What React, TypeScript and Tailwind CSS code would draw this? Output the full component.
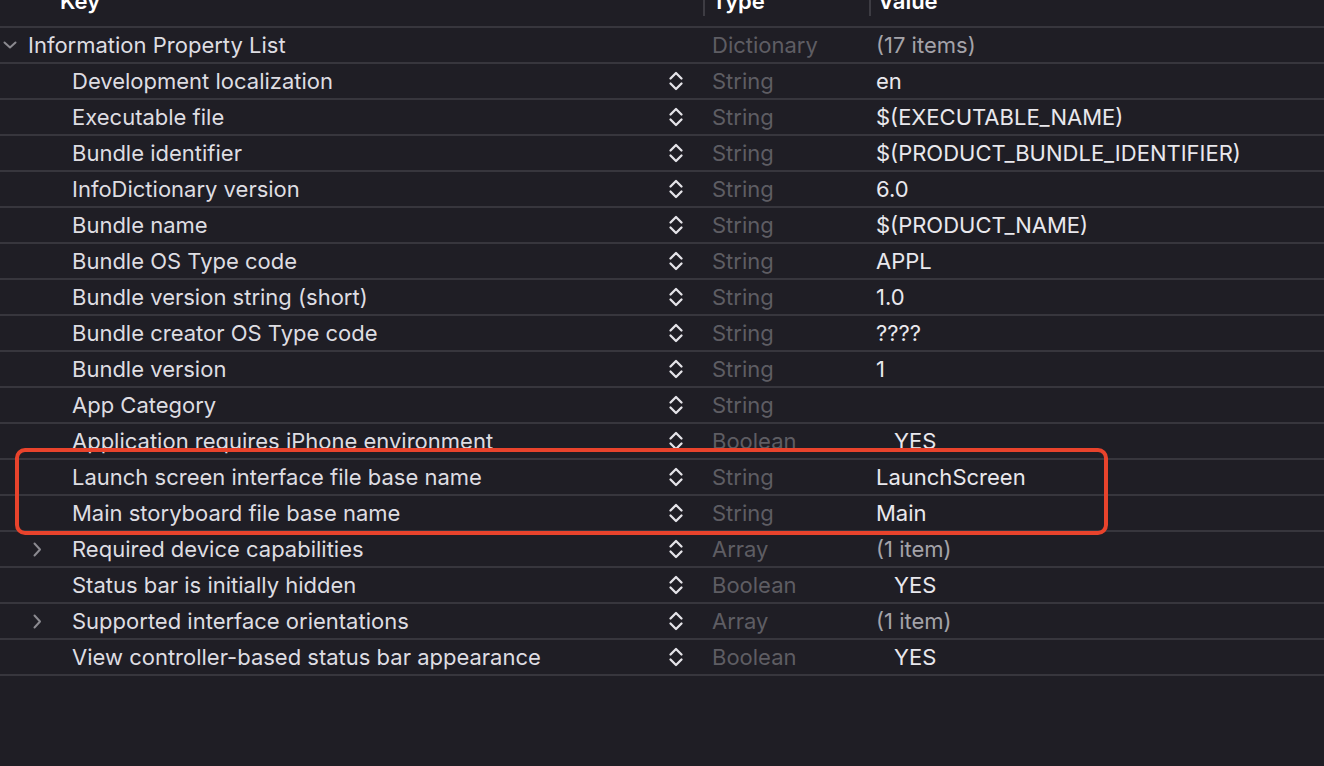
import { ReactNode } from 'react'

type Row = {
  k: string
  type: string
  value?: string
  chevron?: 'down' | 'right'
  top?: boolean
  dimValue?: boolean
  boolValue?: boolean
}

const rows: Row[] = [
  { k: 'Information Property List', type: 'Dictionary', value: '(17 items)', chevron: 'down', top: true, dimValue: true },
  { k: 'Development localization', type: 'String', value: 'en' },
  { k: 'Executable file', type: 'String', value: '$(EXECUTABLE_NAME)' },
  { k: 'Bundle identifier', type: 'String', value: '$(PRODUCT_BUNDLE_IDENTIFIER)' },
  { k: 'InfoDictionary version', type: 'String', value: '6.0' },
  { k: 'Bundle name', type: 'String', value: '$(PRODUCT_NAME)' },
  { k: 'Bundle OS Type code', type: 'String', value: 'APPL' },
  { k: 'Bundle version string (short)', type: 'String', value: '1.0' },
  { k: 'Bundle creator OS Type code', type: 'String', value: '????' },
  { k: 'Bundle version', type: 'String', value: '1' },
  { k: 'App Category', type: 'String', value: '' },
  { k: 'Application requires iPhone environment', type: 'Boolean', value: 'YES', boolValue: true },
]

const marked: Row[] = [
  { k: 'Launch screen interface file base name', type: 'String', value: 'LaunchScreen' },
  { k: 'Main storyboard file base name', type: 'String', value: 'Main' },
]

const rest: Row[] = [
  { k: 'Required device capabilities', type: 'Array', value: '(1 item)', chevron: 'right', dimValue: true },
  { k: 'Status bar is initially hidden', type: 'Boolean', value: 'YES', boolValue: true },
  { k: 'Supported interface orientations', type: 'Array', value: '(1 item)', chevron: 'right', dimValue: true },
  { k: 'View controller-based status bar appearance', type: 'Boolean', value: 'YES', boolValue: true },
]

function Stepper() {
  return (
    <svg width="16" height="20" viewBox="0 0 16 20" fill="none" stroke="#e4e3e8" strokeWidth="2.3" strokeLinecap="round" strokeLinejoin="round">
      <path d="M2.5 7.5 L8 2 L13.5 7.5" />
      <path d="M2.5 12.5 L8 18 L13.5 12.5" />
    </svg>
  )
}

function Chevron({ dir }: { dir: 'down' | 'right' }) {
  if (dir === 'down') {
    return (
      <svg width="14" height="8" viewBox="0 0 14 8" fill="none" stroke="#8b8a90" strokeWidth="2" strokeLinecap="round" strokeLinejoin="round">
        <path d="M1.5 1.5 L7 6.5 L12.5 1.5" />
      </svg>
    )
  }
  return (
    <svg width="9" height="15" viewBox="0 0 9 15" fill="none" stroke="#8b8a90" strokeWidth="2" strokeLinecap="round" strokeLinejoin="round">
      <path d="M1.5 1.5 L7 7.5 L1.5 13.5" />
    </svg>
  )
}

function PlistRow({ row }: { row: Row }) {
  let chevron: ReactNode = null
  if (row.chevron === 'down') {
    chevron = (
      <div className="w-[28px] pl-[3px] flex items-center">
        <Chevron dir="down" />
      </div>
    )
  } else if (row.chevron === 'right') {
    chevron = (
      <div className="w-[72px] pl-[33px] flex items-center">
        <Chevron dir="right" />
      </div>
    )
  }

  return (
    <div className="flex h-[36px] border-b-2 border-[#37363d] items-center">
      <div className="w-[703px] flex items-center shrink-0">
        {chevron ?? <div className={row.top ? 'w-[28px]' : 'w-[72px]'} />}
        <span className="flex-1 text-[#dedde2] whitespace-nowrap">{row.k}</span>
        <div className="w-[35px] flex items-center">{!row.top && <Stepper />}</div>
      </div>
      <div className="w-[166px] pl-[9px] text-[#5e5d63] shrink-0">{row.type}</div>
      <div className={`pl-[7px] ${row.dimValue ? 'text-[#a4a3a9]' : 'text-[#e9e8ed]'}`}>
        {row.boolValue ? <span className="pl-[18px]">{row.value}</span> : row.value}
      </div>
    </div>
  )
}

export default function App() {
  return (
    <div
      className="w-[1324px] h-[766px] bg-[#1f1e25] overflow-hidden text-[22px] leading-none"
      style={{ fontFamily: 'Inter, "Noto Sans", sans-serif' }}
    >
      <div className="flex h-[28px] border-b-2 border-[#37363d] items-start overflow-hidden">
        <div className="w-[703px] pl-[60px] shrink-0 font-semibold text-white -mt-[10px]">Key</div>
        <div className="w-[2px] h-[16px] bg-[#3d3c43] shrink-0" />
        <div className="w-[164px] pl-[7px] shrink-0 font-semibold text-white -mt-[10px]">Type</div>
        <div className="w-[2px] h-[16px] bg-[#3d3c43] shrink-0" />
        <div className="pl-[7px] font-semibold text-white -mt-[10px]">Value</div>
      </div>
      {rows.map((r) => (
        <PlistRow key={r.k} row={r} />
      ))}
      <div className="relative">
        {marked.map((r) => (
          <PlistRow key={r.k} row={r} />
        ))}
        <div className="absolute left-[15px] w-[1093px] -top-[12px] -bottom-[3px] border-4 border-[#e8432c] rounded-[10px] pointer-events-none" />
      </div>
      {rest.map((r) => (
        <PlistRow key={r.k} row={r} />
      ))}
    </div>
  )
}
